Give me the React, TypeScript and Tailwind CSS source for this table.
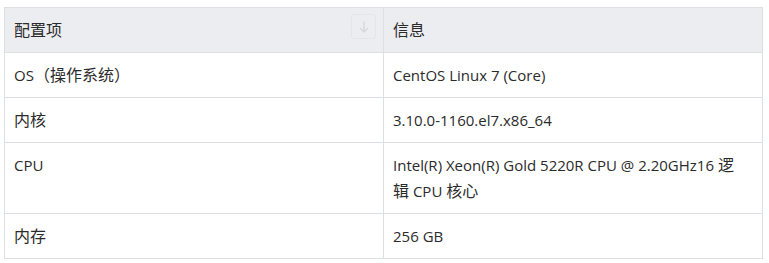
const CJK = /([\u3000-\u303f\u4e00-\u9fff\uff00-\uffef]+)/;

// Chinese runs are set a touch larger than the Latin text, as in the source page
function Mixed({ text }: { text: string }) {
  return (
    <>
      {text.split(CJK).map((part, i) =>
        CJK.test(part) ? (
          <span key={i} className="text-[16px]">
            {part}
          </span>
        ) : (
          part
        )
      )}
    </>
  );
}

const ROWS = [
  { key: "OS（操作系统）", value: ["CentOS Linux 7 (Core)"] },
  { key: "内核", value: ["3.10.0-1160.el7.x86_64"] },
  { key: "CPU", value: ["Intel(R) Xeon(R) Gold 5220R CPU @ 2.20GHz16 逻", "辑 CPU 核心"] },
  { key: "内存", value: ["256 GB"] },
];

function SortButton() {
  return (
    <span className="absolute right-[7px] top-[6px] w-[25px] h-[25px] rounded-[3px] border border-[#e3e5e8] flex items-center justify-center">
      <svg width="12" height="14" viewBox="0 0 12 14" fill="none" stroke="#d6d8db" strokeWidth="1.4" strokeLinecap="round" strokeLinejoin="round">
        <path d="M6 2v10M2.5 8.5 6 12l3.5-3.5" />
      </svg>
    </span>
  );
}

export default function App() {
  return (
    <div
      className="w-[769px] h-[263px] bg-white pl-[4px] pt-[7px] text-[15px] leading-[26px] text-[#2b2b2b]"
      style={{ fontFamily: '"Segoe UI", "Open Sans", "Noto Sans CJK SC", sans-serif' }}
    >
      <table className="w-[759px] border-collapse table-fixed">
        <thead>
          <tr className="bg-[#ebedf0]">
            <th className="relative w-1/2 border border-[#dcdfe3] px-[9px] py-[9px] text-left font-normal">
              <Mixed text="配置项" />
              <SortButton />
            </th>
            <th className="w-1/2 border border-[#dcdfe3] px-[9px] py-[9px] text-left font-normal">
              <Mixed text="信息" />
            </th>
          </tr>
        </thead>
        <tbody>
          {ROWS.map((row) => (
            <tr key={row.key}>
              <td className="border border-[#dcdfe3] px-[9px] py-[9px] align-top">
                <Mixed text={row.key} />
              </td>
              <td className="border border-[#dcdfe3] px-[9px] py-[9px] align-top">
                {row.value.map((line, i) => (
                  <div key={i}>
                    <Mixed text={line} />
                  </div>
                ))}
              </td>
            </tr>
          ))}
        </tbody>
      </table>
    </div>
  );
}
